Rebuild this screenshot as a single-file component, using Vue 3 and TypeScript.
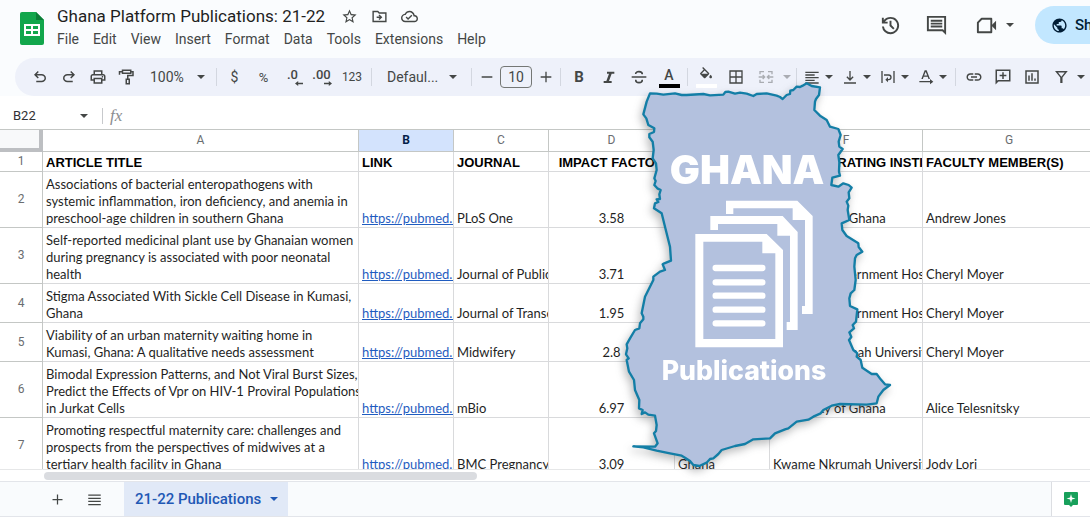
<script setup lang="ts">
interface Row {
  title: string
  journal: string
  impact: string
  institution: string
  faculty: string
}

const menus: string[] = ['File', 'Edit', 'View', 'Insert', 'Format', 'Data', 'Tools', 'Extensions', 'Help']

const columns: string[] = ['A', 'B', 'C', 'D', 'E', 'F', 'G']

const rows: Row[] = [
  {
    title: 'Associations of bacterial enteropathogens with\nsystemic inflammation, iron deficiency, and anemia in\npreschool-age children in southern Ghana',
    journal: 'PLoS One', impact: '3.58', institution: 'University of Ghana', faculty: 'Andrew Jones',
  },
  {
    title: 'Self-reported medicinal plant use by Ghanaian women\nduring pregnancy is associated with poor neonatal\nhealth',
    journal: 'Journal of Public Health', impact: '3.71', institution: 'Suntreso Government Hospital', faculty: 'Cheryl Moyer',
  },
  {
    title: 'Stigma Associated With Sickle Cell Disease in Kumasi,\nGhana',
    journal: 'Journal of Transcultural Nursing', impact: '1.95', institution: 'Suntreso Government Hospital', faculty: 'Cheryl Moyer',
  },
  {
    title: 'Viability of an urban maternity waiting home in\nKumasi, Ghana: A qualitative needs assessment',
    journal: 'Midwifery', impact: '2.8', institution: 'Kwame Nkrumah University', faculty: 'Cheryl Moyer',
  },
  {
    title: 'Bimodal Expression Patterns, and Not Viral Burst Sizes,\nPredict the Effects of Vpr on HIV-1 Proviral Populations\nin Jurkat Cells',
    journal: 'mBio', impact: '6.97', institution: 'University of Ghana', faculty: 'Alice Telesnitsky',
  },
  {
    title: 'Promoting respectful maternity care: challenges and\nprospects from the perspectives of midwives at a\ntertiary health facility in Ghana',
    journal: 'BMC Pregnancy and Childbirth', impact: '3.09', institution: 'Kwame Nkrumah University', faculty: 'Jody Lori',
  },
]

const historyTools = [
  { label: 'Undo', d: 'M7 19v-2h7.1q1.575 0 2.738-1T18 13.5T16.838 11T14.1 10H7.8l2.6 2.6L9 14L4 9l5-5l1.4 1.4L7.8 8h6.3q2.425 0 4.163 1.575T20 13.5t-1.737 3.925T14.1 19z' },
  { label: 'Redo', d: 'M9.9 19q-2.425 0-4.163-1.575T4 13.5t1.737-3.925T9.9 8h6.3l-2.6-2.6L15 4l5 5l-5 5l-1.4-1.4l2.6-2.6H9.9q-1.575 0-2.737 1T6 13.5T7.163 16T9.9 17H17v2z' },
  { label: 'Print', d: 'M16 8V5H8v3H6V3h12v5zM18 12.5q.425 0 .713-.288T19 11.5t-.288-.712T18 10.5t-.712.288T17 11.5t.288.713.712.287M16 19v-4H8v4zm2 2H6v-4H2v-6q0-1.275.875-2.137T5 8h14q1.275 0 2.138.863T22 11v6h-4zm2-6v-4q0-.425-.288-.712T19 10H5q-.425 0-.712.288T4 11v4h2v-2h12v2z' },
  { label: 'Paint format', d: 'M5 2h13v2h3v7h-7v3h2v8h-6v-8h2V9h7V6h-1v2H5V6H3v3H1V4h4zm2 2v2h9V4zm5 12v4h2v-4z' },
]

const splitTools = [
  { label: 'Horizontal align', d: 'M2 4h20v2H2zM2 8h14v2H2zM2 12h20v2H2zM2 16h14v2H2zM2 20h20v2H2z' },
  { label: 'Vertical align', d: 'M11 3h2v11l3-3 1.400 1.400L12 18l-5.400-5.600L8 11l3 3zM3 20h18v2H3z' },
  { label: 'Text wrapping', d: 'M2 3h2v18H2zM20 3h2v18h-2zM6 8h7a4.500 4.500 0 0 1 0 9h-1v3l-4-4 4-4v3h1a2.500 2.500 0 0 0 0-5H6z' },
  { label: 'Text rotation', d: 'M10 2h3l5 13h-2.300l-1.200-3.400H8.500L7.300 15H5zM9.200 9.700h4.600L11.500 4zM2 18h16v-3l5 4-5 4v-3H2z' },
]

const insertTools = [
  { label: 'Insert link', d: 'M3.9 12c0-1.710 1.390-3.100 3.100-3.100h4V7H7c-2.760 0-5 2.240-5 5s2.240 5 5 5h4v-1.900H7c-1.710 0-3.100-1.390-3.100-3.100zM8 13h8v-2H8v2zm9-6h-4v1.900h4c1.710 0 3.100 1.390 3.100 3.100s-1.390 3.100-3.100 3.100h-4V17h4c2.760 0 5-2.240 5-5s-2.240-5-5-5z' },
  { label: 'Insert comment', d: 'M2 2h20v16H6l-4 4zm2 2v13l1-1h15V4zM11 5.500h2V9h3.500v2H13v3.500h-2V11H7.500V9H11z' },
  { label: 'Insert chart', d: 'M3 3h18v18H3zm2 2v14h14V5zM7 10h2v7H7zM11 7h2v10h-2zM15 14h2v3h-2z' },
  { label: 'Create a filter', d: 'M4 4h17l-7 8.500V20h-3v-7.500zm4 2 4.500 5.500L17 6z' },
]

const titleTools = [
  { label: 'Star', d: 'M22 9.240l-7.190-.620L12 2 9.190 8.630 2 9.240l5.460 4.730L5.820 21 12 17.270 18.180 21l-1.630-7.030L22 9.240zM12 15.400l-3.760 2.270 1-4.280-3.320-2.880 4.380-.380L12 6.100l1.710 4.040 4.380.380-3.320 2.880 1 4.280L12 15.400z' },
  { label: 'Move', d: 'M22 6H12l-2-2H2v16h20zm-2 12H4V6h5.170l2 2H20zM12 17l4-4-4-4-1.400 1.400 1.600 1.600H8v2h4.200l-1.600 1.600z' },
  { label: 'Document status', d: 'M19.350 10.040C18.670 6.590 15.640 4 12 4 9.110 4 6.600 5.640 5.350 8.040 2.340 8.360 0 10.910 0 14c0 3.310 2.690 6 6 6h13c2.760 0 5-2.240 5-5 0-2.640-2.050-4.780-4.650-4.960zM19 18H6c-2.210 0-4-1.790-4-4 0-2.050 1.530-3.760 3.560-3.970l1.070-.110.500-.950C8.080 7.140 9.940 6 12 6c2.620 0 4.880 1.860 5.390 4.430l.300 1.500 1.530.110c1.560.100 2.780 1.410 2.780 2.960 0 1.650-1.350 3-3 3zm-9-3.820-2.090-2.090L6.500 13.500 10 17l6.010-6.010-1.410-1.410z' },
]

const borders =
  'M120 55 140 56 160 59 195 55 215 60 230 60 280 57 300 61 340 59 346 51 355 50 375 56 390 53 410 56 430 63 440 57 470 55 500 62 510 66 518 72 530 60 540 57 541 47 550 45 560 35 570 36 578 32 590 25 605 33 630 37 627 60 618 72 615 80 613 105 630 122 650 135 660 155 685 162 692 180 686 200 688 215 698 222 685 240 688 262 687 290 690 302 667 308 664 330 685 335 700 325 716 330 725 338 716 352 718 370 710 380 715 392 713 405 ' +
  '718 435 695 445 697 465 710 483 745 505 746 516 757 530 740 540 735 550 733 575 737 615 733 645 722 655 718 670 720 693 742 703 738 740 728 750 732 760 718 772 ' +
  '724 786 717 795 730 825 742 835 740 845 752 855 757 878 785 897 800 897 812 913 825 928 840 930 820 945 805 965 800 985 770 989 690 987 665 992 640 1005 632 1015 610 1025 595 1034 560 1040 535 1060 525 1063 495 1075 480 1090 430 1093 405 1107 375 1113 335 1125 325 1137 310 1150 300 1152 290 1163 268 1173 250 1170 240 1158 225 1148 215 1142 180 1135 140 1127 100 1117 70 1114 135 1115 143 1105 132 1075 138 1068 140 1050 135 1022 115 1019 105 1012 95 1017 98 1005 87 1000 88 975 75 945 72 915 57 890 50 855 56 850 48 838 52 820 50 808 60 790 ' +
  '75 765 88 760 90 745 100 733 100 725 95 715 105 665 130 615 130 605 150 590 165 585 158 568 163 565 183 557 180 515 165 455 155 415 132 400 135 385 145 381 140 373 150 372 148 358 152 345 142 340 133 330 137 318 133 310 140 285 138 265 128 250 131 225 128 200 118 187 118 177 132 171 133 160 115 150 109 130 100 118 110 80Z'
</script>

<template>
  <div class="app">
    <header class="top">
      <svg class="logo" viewBox="0 0 24 33" aria-hidden="true">
        <path d="M2 0h14l8 8v23a2 2 0 0 1-2 2H2a2 2 0 0 1-2-2V2a2 2 0 0 1 2-2z" fill="#12a64c" />
        <path d="M16 0l8 8h-8z" fill="#0b7d37" />
        <path d="M4 12h16v12H4zm2 2v3h5v-3zm7 0v3h5v-3zm-7 5v3h5v-3zm7 0v3h5v-3z" fill="#fff" fill-rule="evenodd" />
      </svg>
      <div class="heading">
        <div class="title-row">
          <h1>Ghana Platform Publications: 21-22</h1>
          <button v-for="t in titleTools" :key="t.label" class="title-tool" :aria-label="t.label">
            <svg viewBox="0 0 24 24"><path :d="t.d" /></svg>
          </button>
        </div>
        <nav class="menus">
          <button v-for="m in menus" :key="m">{{ m }}</button>
        </nav>
      </div>
      <div class="actions">
        <button aria-label="Version history">
          <svg viewBox="0 0 24 24"><path d="M12 21q-3.450 0-6.012-2.287T3.050 13H5.100q.350 2.600 2.313 4.300T12 19q2.925 0 4.963-2.037T19 12t-2.037-4.962T12 5q-1.725 0-3.225.800T6.250 8H9v2H3V4h2v2.350q1.275-1.600 3.113-2.475T12 3q1.875 0 3.513.713t2.850 1.924 1.925 2.850T21 12t-.712 3.513-1.925 2.850-2.850 1.925T12 21m2.800-4.800L11 12.400V7h2v4.600l3.200 3.200z" /></svg>
        </button>
        <button aria-label="Comments">
          <svg viewBox="0 0 24 24"><path d="M22 2H2v16h16l4 4zM20 4v13.170L18.830 16H4V4zM6 12h12v2H6zm0-3h12v2H6zm0-3h12v2H6z" /></svg>
        </button>
        <button class="meet" aria-label="Join a call">
          <svg viewBox="0 0 24 24"><path d="M7 5h10v14H3V9z" fill="none" stroke="currentColor" stroke-width="2" stroke-linejoin="round" /><path d="M17 12l5-5v10z" /></svg>
          <i class="caret"></i>
        </button>
        <button class="share">
          <svg viewBox="0 0 24 24"><path d="M12 2C6.480 2 2 6.480 2 12s4.480 10 10 10 10-4.480 10-10S17.520 2 12 2zm-1 17.930c-3.950-.490-7-3.850-7-7.930 0-.620.080-1.210.210-1.790L9 15v1c0 1.100.900 2 2 2v1.930zm6.900-2.540c-.260-.810-1-1.390-1.900-1.390h-1v-3c0-.550-.450-1-1-1H8v-2h2c.550 0 1-.450 1-1V7h2c1.100 0 2-.900 2-2v-.410c2.930 1.190 5 4.060 5 7.410 0 2.080-.800 3.970-2.100 5.390z" /></svg>
          Share
        </button>
      </div>
    </header>

    <div class="toolbar-wrap">
      <div class="toolbar" role="toolbar" aria-label="Formatting">
        <button v-for="t in historyTools" :key="t.label" class="large" :aria-label="t.label">
          <svg viewBox="0 0 24 24"><path :d="t.d" fill-rule="evenodd" /></svg>
        </button>
        <label class="drop zoom"><select aria-label="Zoom"><option>100%</option></select><i class="caret"></i></label>
        <span class="sep"></span>
        <button aria-label="Format as currency">$</button>
        <button class="percent" aria-label="Format as percent">%</button>
        <button class="decimal" aria-label="Decrease decimal places">.0<svg viewBox="0 0 10 6"><path d="M10 2H4V0L0 3l4 3V4h6z" /></svg></button>
        <button class="decimal" aria-label="Increase decimal places">.00<svg viewBox="0 0 10 6"><path d="M0 2h6V0l4 3-4 3V4H0z" /></svg></button>
        <button class="formats" aria-label="More formats">123</button>
        <span class="sep"></span>
        <label class="drop family"><select aria-label="Font"><option>Defaul...</option></select><i class="caret"></i></label>
        <span class="sep"></span>
        <button class="step" aria-label="Decrease font size"><svg viewBox="0 0 24 24"><path d="M4 11h16v2H4z" /></svg></button>
        <input class="size" aria-label="Font size" value="10" />
        <button class="step" aria-label="Increase font size"><svg viewBox="0 0 24 24"><path d="M11 4h2v7h7v2h-7v7h-2v-7H4v-2h7z" /></svg></button>
        <span class="sep"></span>
        <button class="wide bold" aria-label="Bold">B</button>
        <button class="wide" aria-label="Italic"><svg viewBox="0 0 24 24"><path d="M9 4h11v3h-4l-4 11h4v3H4v-3h4l4-11H9z" /></svg></button>
        <button class="wide" aria-label="Strikethrough"><svg viewBox="0 0 24 24"><path d="M1 11h22v2H1z" /><path d="M17 8c0-5-10-5.500-10-.500M7 16c0 6 10 6 10 0" fill="none" stroke="currentColor" stroke-width="2.400" /></svg></button>
        <button class="wide swatch" aria-label="Text color"><b>A</b><span class="bar"></span></button>
        <span class="sep"></span>
        <button class="wide swatch" aria-label="Fill color"><svg viewBox="0 0 24 24"><path d="M16.560 8.940L7.620 0 6.210 1.410l2.380 2.380-5.150 5.150c-.590.590-.590 1.540 0 2.120l5.500 5.500c.290.290.680.440 1.060.440s.770-.150 1.060-.440l5.500-5.500c.590-.580.590-1.530 0-2.120zM5.210 10L10 5.210 14.790 10H5.210zM19 11.500s-2 2.170-2 3.500c0 1.100.900 2 2 2s2-.900 2-2c0-1.330-2-3.500-2-3.500z" /></svg><span class="bar light"></span></button>
        <button class="wide" aria-label="Borders"><svg viewBox="0 0 24 24"><path d="M3 3h18v18H3zM12 3v18M3 12h18" fill="none" stroke="currentColor" stroke-width="2" /></svg></button>
        <button class="wide muted" aria-label="Merge cells" disabled><svg viewBox="0 0 24 24"><path d="M3 8V4h6M15 4h6v4M3 16v4h6M15 20h6v-4M1 12h8M23 12h-8M7 9l3 3-3 3M17 9l-3 3 3 3" fill="none" stroke="currentColor" stroke-width="2" /></svg></button>
        <button class="arrow muted" aria-label="Merge options" disabled><i class="caret"></i></button>
        <span class="sep"></span>
        <button v-for="t in splitTools" :key="t.label" class="split" :aria-label="t.label">
          <svg viewBox="0 0 24 24"><path :d="t.d" fill-rule="evenodd" /></svg><i class="caret"></i>
        </button>
        <span class="sep"></span>
        <button v-for="t in insertTools" :key="t.label" class="large" :aria-label="t.label">
          <svg viewBox="0 0 24 24"><path :d="t.d" fill-rule="evenodd" /></svg>
        </button>
        <button class="arrow" aria-label="Filter views"><i class="caret"></i></button>
      </div>
    </div>

    <div class="formula">
      <input class="name-box" aria-label="Name box" value="B22" />
      <i class="caret"></i>
      <label class="fx" for="formula">fx</label>
      <input id="formula" class="formula-input" />
    </div>

    <main class="grid">
      <table>
        <colgroup>
          <col class="c-num" /><col class="c-a" /><col class="c-b" /><col class="c-b" /><col class="c-d" /><col class="c-b" /><col class="c-f" /><col class="c-g" />
        </colgroup>
        <thead>
          <tr>
            <td class="corner"></td>
            <th v-for="c in columns" :key="c" scope="col" :class="{ active: c === 'B' }">{{ c }}</th>
          </tr>
        </thead>
        <tbody>
          <tr class="labels">
            <th scope="row">1</th>
            <td>ARTICLE TITLE</td>
            <td>LINK</td>
            <td>JOURNAL</td>
            <td class="center">IMPACT FACTOR</td>
            <td>COUNTRY</td>
            <td>COLLABORATING INSTITUTION(S)</td>
            <td>FACULTY MEMBER(S)</td>
          </tr>
          <tr v-for="(r, i) in rows" :key="i">
            <th scope="row">{{ i + 2 }}</th>
            <td class="wrap">{{ r.title }}</td>
            <td><a href="#">https://pubmed.ncbi</a></td>
            <td>{{ r.journal }}</td>
            <td class="center">{{ r.impact }}</td>
            <td>Ghana</td>
            <td>{{ r.institution }}</td>
            <td>{{ r.faculty }}</td>
          </tr>
        </tbody>
      </table>
    </main>

    <div class="scroll"><span class="thumb"></span></div>

    <footer class="sheets">
      <button class="sheet-tool" aria-label="Add sheet"><svg viewBox="0 0 24 24"><path d="M11 4h2v7h7v2h-7v7h-2v-7H4v-2h7z" /></svg></button>
      <button class="sheet-tool" aria-label="All sheets"><svg viewBox="0 0 24 24"><path d="M2 4h20v2H2zM2 9h20v2H2zM2 14h20v2H2zM2 19h20v2H2z" /></svg></button>
      <button class="tab">21-22 Publications<i class="caret"></i></button>
      <button class="explore" aria-label="Explore">
        <svg viewBox="0 0 14 15"><path d="M1 0h12a1 1 0 0 1 1 1v11a1 1 0 0 1-1 1H9l-2 2-2-2H1a1 1 0 0 1-1-1V1a1 1 0 0 1 1-1z" fill="#18a05b" /><path d="M7 2l1 3.500L11.500 6.500 8 7.500 7 11 6 7.500 2.500 6.500 6 5.500z" fill="#fff" /></svg>
      </button>
    </footer>

    <svg class="map" viewBox="0 0 870 1200" role="img" aria-label="Ghana Publications">
      <path :d="borders" fill="#b3c1de" stroke="#137ea6" stroke-width="7" stroke-linejoin="round" />
      <g fill="#fff" transform="translate(0 375)">
        <path d="M348 2H562L608 48V342H576V318H585V60H548V25H370V42H348Z" />
        <path d="M301 48H518L563 96V390H530V366H540V107H502V72H324V90H301Z" />
        <path d="M256 102H470L519 150V442H256ZM280 125V417H496V160H457V125Z" fill-rule="evenodd" />
        <path d="M317 204H457M317 247H457M317 287H457M317 329H457M317 370H457" stroke="#fff" stroke-width="19" stroke-linecap="round" />
      </g>
      <text class="map-title" x="411" y="327">GHANA</text>
      <text class="map-sub" x="402" y="915">Publications</text>
    </svg>
  </div>
</template>

<style>
html,
body {
  margin: 0;
  overflow: hidden;
}
</style>

<style scoped>
.app {
  position: relative;
  display: flex;
  flex-direction: column;
  height: 100vh;
  padding-bottom: 2px;
  box-sizing: border-box;
  overflow: hidden;
  background: #fff;
  color: #444746;
  font-family: Roboto, "Liberation Sans", sans-serif;
}

button,
input,
select {
  margin: 0;
  padding: 0;
  border: 0;
  background: none;
  color: inherit;
  font: inherit;
  appearance: none;
  outline: none;
}

svg {
  display: block;
  flex: none;
  fill: currentColor;
}

.caret {
  flex: none;
  width: 0;
  height: 0;
  border: 4px solid transparent;
  border-top-color: currentColor;
  border-bottom: 0;
}

.top {
  display: flex;
  height: 58px;
  flex: none;
  background: #fafcfe;
}

.logo {
  width: 24px;
  height: 33px;
  margin: 12px 13px 0 20px;
}

.heading {
  flex: 1;
  white-space: nowrap;
}

.title-row {
  display: flex;
  align-items: center;
  height: 24px;
  margin-top: 4px;
}

h1 {
  margin: 0 9px 0 0;
  color: #1f1f1f;
  font-size: 17px;
  font-weight: 400;
  line-height: 24px;
}

.title-tool {
  width: 30px;
  display: flex;
  justify-content: center;
}

.title-tool svg {
  width: 17px;
  height: 17px;
}

.menus {
  display: flex;
  gap: 14px;
  margin-top: 2px;
  font-size: 14px;
  line-height: 18px;
}

.actions {
  display: flex;
  align-items: center;
  height: 38px;
  margin-top: 6px;
}

.actions > button {
  display: flex;
  align-items: center;
  justify-content: center;
  width: 46px;
}

.actions svg {
  width: 23px;
  height: 23px;
}

.actions > .meet {
  width: 76px;
  gap: 8px;
  padding-right: 5px;
}

.actions > .share {
  justify-content: flex-start;
  width: 55px;
  height: 38px;
  padding-left: 16px;
  gap: 7px;
  overflow: hidden;
  border-radius: 19px 0 0 19px;
  background: #c2e7ff;
  color: #001d35;
  font-size: 15px;
  font-weight: 500;
}

.actions .share svg {
  width: 17px;
  height: 17px;
}

.toolbar-wrap {
  flex: none;
  padding-left: 15px;
  background: #fafcfe;
}

.toolbar {
  display: flex;
  align-items: center;
  height: 38px;
  padding-left: 10px;
  overflow: hidden;
  border-radius: 19px 0 0 19px;
  background: #eef1fa;
  font-size: 14px;
}

.toolbar > button {
  display: flex;
  align-items: center;
  justify-content: center;
  flex: none;
  width: 29px;
  height: 28px;
}

.toolbar svg {
  width: 16px;
  height: 16px;
}

.toolbar > .large svg {
  width: 18px;
  height: 18px;
}

.sep {
  flex: none;
  width: 1px;
  height: 18px;
  margin: 0 3px;
  background: #d3d7e0;
}

.drop {
  display: flex;
  align-items: center;
  flex: none;
  box-sizing: border-box;
}

.drop select {
  flex: 1;
  min-width: 0;
}

.drop.zoom {
  width: 72px;
  padding: 0 8px 0 9px;
}

.drop.family {
  width: 93px;
  padding: 0 11px 0 12px;
}

.toolbar > .percent {
  font-size: 13px;
}

.toolbar > .decimal {
  flex-direction: column;
  font-size: 13px;
  font-weight: 500;
  line-height: 13px;
}

.decimal svg {
  width: 8px;
  height: 5px;
  align-self: flex-end;
  margin-right: 4px;
}

.toolbar > .formats {
  width: 32px;
  font-size: 12px;
}

.toolbar > .step {
  width: 23px;
}

.size {
  flex: none;
  width: 32px;
  height: 22px;
  margin: 0 2px;
  box-sizing: border-box;
  border: 1px solid #747775;
  border-radius: 4px;
  text-align: center;
}

.toolbar > .wide {
  width: 30px;
}

.toolbar > .bold {
  font-size: 15px;
  font-weight: 700;
}

.toolbar > .swatch {
  flex-direction: column;
  justify-content: flex-end;
  gap: 1px;
  height: 22px;
}

.swatch b {
  font-size: 14px;
  font-weight: 500;
  line-height: 15px;
}

.bar {
  width: 21px;
  height: 4px;
  background: #000;
}

.bar.light {
  background: #fff;
}

.toolbar > .arrow {
  width: 12px;
}

.muted {
  opacity: 0.4;
}

.toolbar > .split {
  justify-content: flex-start;
  width: 38px;
  padding-left: 4px;
  gap: 5px;
}

.formula {
  display: flex;
  align-items: center;
  flex: none;
  height: 33px;
  padding: 6px 0 0 13px;
  box-sizing: border-box;
}

.name-box {
  width: 67px;
  color: #303134;
  font-size: 13px;
}

.fx {
  margin-left: 14px;
  padding-left: 7px;
  border-left: 1px solid #c7c9cc;
  color: #8a8d91;
  font: italic 17px/16px "Liberation Serif", serif;
}

.formula-input {
  flex: 1;
  margin-left: 8px;
}

.grid {
  flex: 1;
  min-height: 0;
  overflow: hidden;
  border-bottom: 1px solid #e6e7e8;
}

table {
  width: 1096px;
  min-width: 100%;
  table-layout: fixed;
  border-spacing: 0;
  border-top: 1px solid #c4c7c5;
  color: #1f1f1f;
  font-family: Lato, "Liberation Sans", sans-serif;
  font-size: 13px;
  line-height: 17px;
}

.c-num { width: 43px; }
.c-a { width: 316px; }
.c-b { width: 95px; }
.c-d { width: 126px; }
.c-f { width: 153px; }
.c-g { width: 173px; }

th,
td {
  padding: 4px 0 0 3px;
  overflow: hidden;
  border-right: 1px solid #d9dadc;
  border-bottom: 1px solid #d9dadc;
  text-align: left;
  vertical-align: bottom;
  white-space: nowrap;
}

th {
  padding: 0;
  border-color: #c4c7c5;
  color: #6a6d70;
  font-family: Roboto, sans-serif;
  font-size: 12px;
  font-weight: 400;
  text-align: center;
  vertical-align: middle;
}

thead th,
thead td {
  height: 21px;
  padding: 0;
}

th.active {
  background: #d3e3fd;
  color: #041e49;
  font-weight: 700;
}

thead td.corner {
  border-right: 4px solid #bdbfc2;
  border-bottom: 4px solid #bdbfc2;
  height: 18px;
  background: #f8f9fa;
}

.labels td {
  padding-top: 2px;
  color: #000;
  font-family: "Liberation Sans", Arial, sans-serif;
  font-weight: 700;
}

td.center {
  padding-right: 3px;
  text-align: center;
}

td.wrap {
  white-space: pre;
}

td a {
  color: #1f5cc0;
}

.scroll {
  flex: none;
  height: 11px;
  padding: 2px 0 0 44px;
  box-sizing: border-box;
}

.thumb {
  display: block;
  width: 433px;
  height: 8px;
  border-radius: 4px;
  background: #dadce0;
}

.sheets {
  display: flex;
  align-items: center;
  flex: none;
  height: 36px;
  padding-left: 39px;
  box-sizing: border-box;
  border-top: 1px solid #e3e5ea;
  border-bottom: 1px solid #e3e5ea;
  background: #f9fbfd;
}

.sheet-tool {
  display: flex;
  justify-content: center;
  width: 37px;
}

.sheet-tool svg {
  width: 15px;
  height: 15px;
}

.tab {
  display: flex;
  align-items: center;
  gap: 9px;
  height: 34px;
  margin-left: 11px;
  padding: 0 10px 0 11px;
  background: #e1e9f7;
  color: #1f58b5;
  font-size: 15px;
  font-weight: 500;
}

.explore {
  display: flex;
  align-items: center;
  width: 39px;
  height: 34px;
  margin-left: auto;
  padding-left: 12px;
  border-left: 1px solid #dcdee2;
  background: #fff;
}

.explore svg {
  width: 14px;
  height: 15px;
}

.map {
  position: absolute;
  top: 75px;
  left: 610px;
  width: 290px;
  height: 400px;
  overflow: visible;
  filter: drop-shadow(-2px 4px 4px rgba(60, 64, 67, 0.35));
  pointer-events: none;
}

.map-title,
.map-sub {
  fill: #fff;
  font-family: Inter, "Liberation Sans", sans-serif;
  text-anchor: middle;
}

.map-title {
  font-size: 120px;
  font-weight: 900;
}

.map-sub {
  font-size: 80px;
  font-weight: 800;
}
</style>
